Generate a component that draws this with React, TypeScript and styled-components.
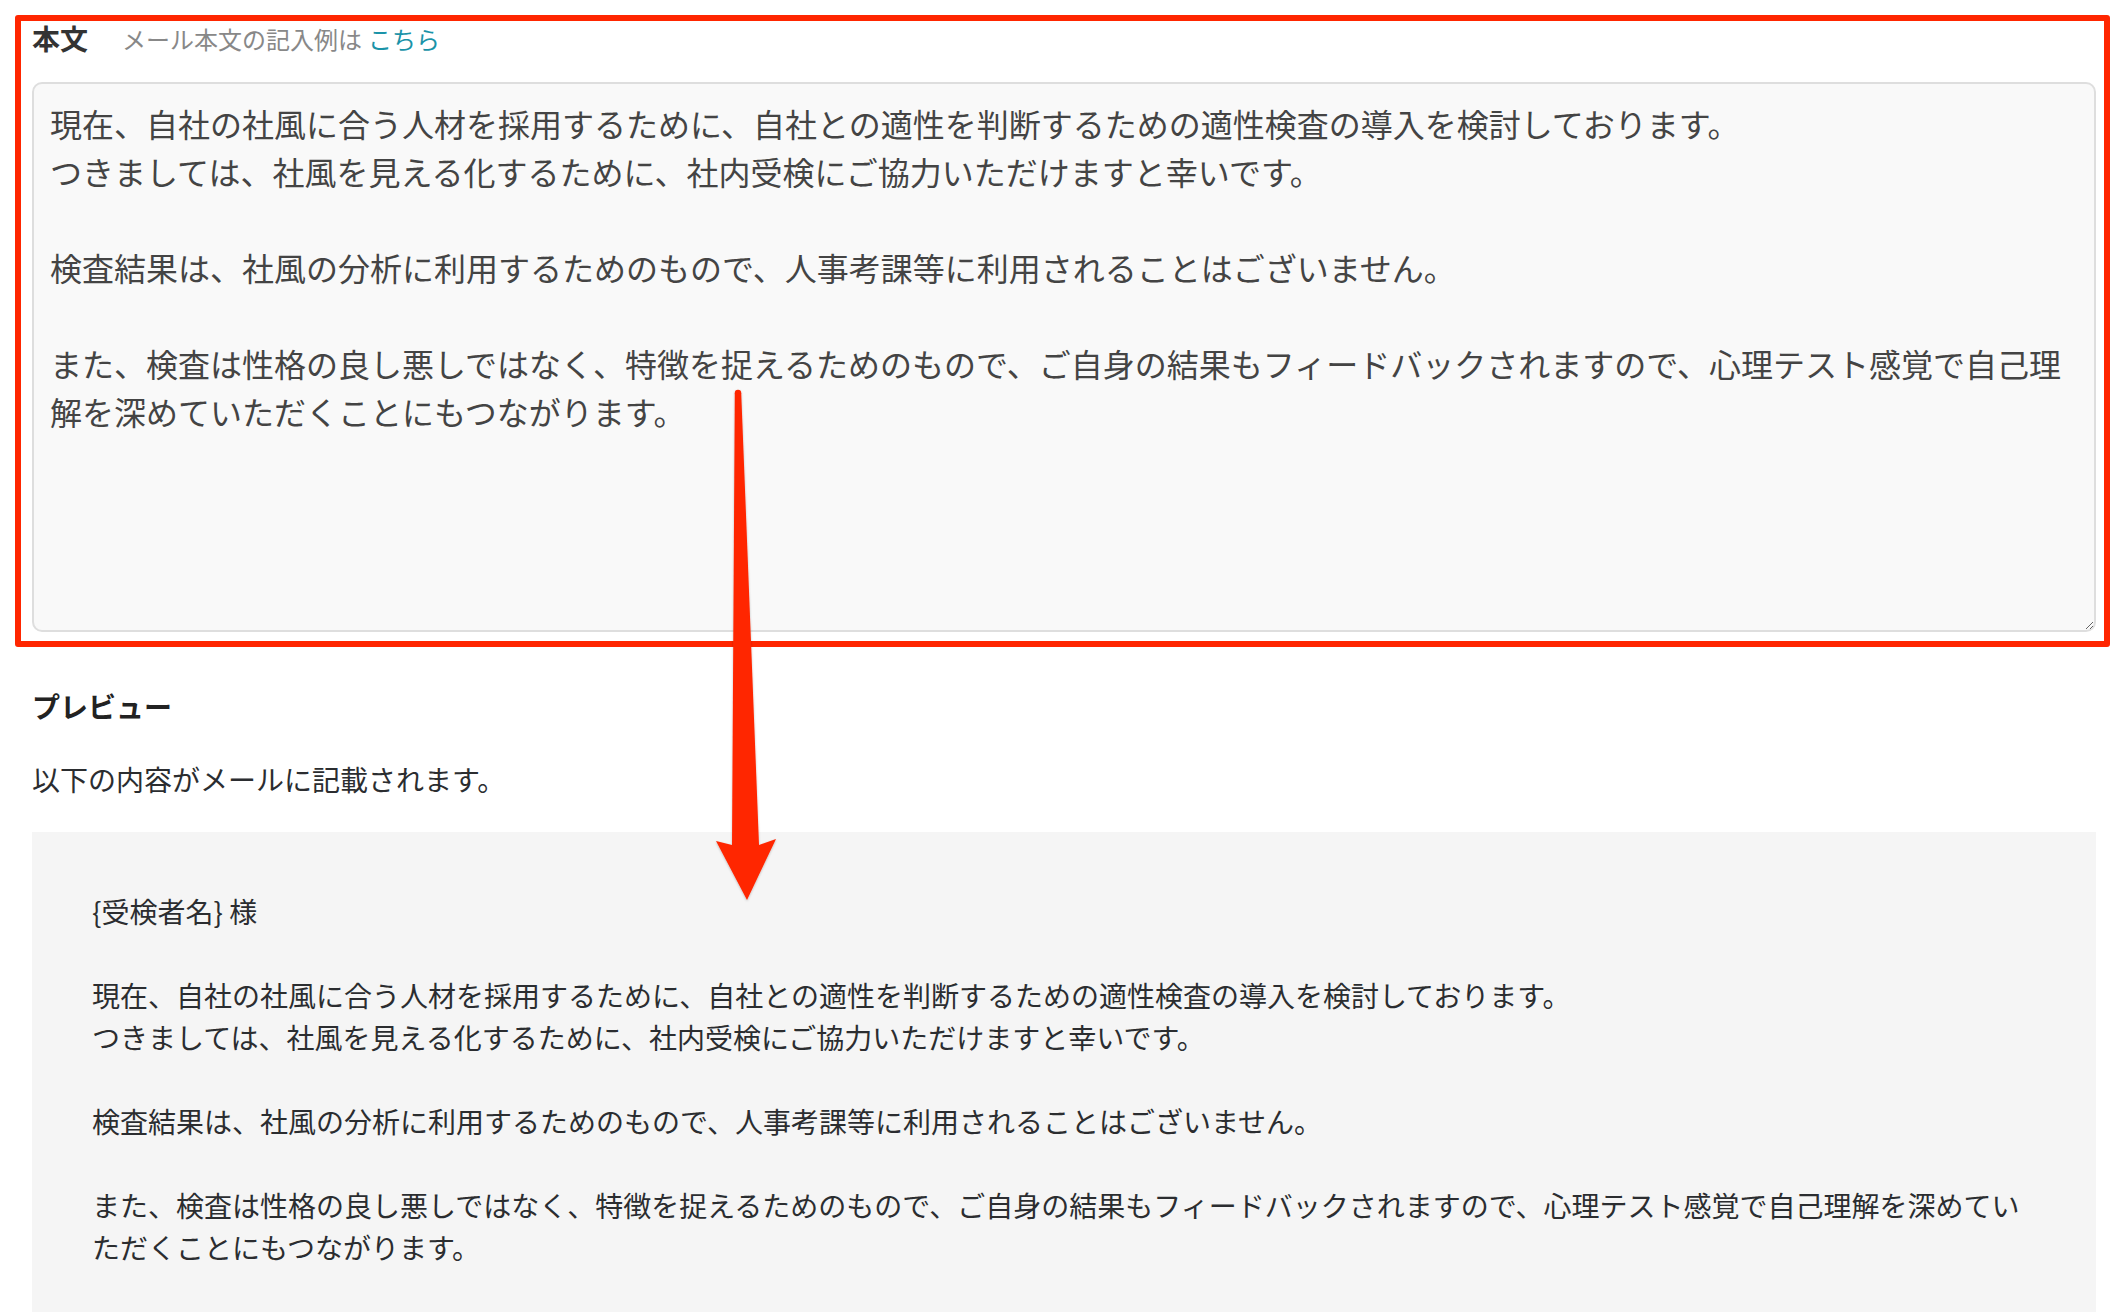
import styled, { createGlobalStyle } from "styled-components";

const GlobalStyle = createGlobalStyle`
  html, body {
    margin: 0;
    padding: 0;
    background: #ffffff;
  }
  body {
    font-family: "Noto Sans CJK JP", "Noto Sans", sans-serif;
    color: #333;
  }
`;

const Page = styled.div`
  position: relative;
  padding: 15px 4px 0 15px;
  min-height: 1312px;
  box-sizing: border-box;
`;

const Highlight = styled.section`
  border: 6px solid #ff2600;
  border-radius: 3px;
  padding: 0 8px 9px 11px;
`;

const LabelRow = styled.div`
  display: flex;
  align-items: center;
  height: 34px;
  margin-bottom: 27px;
`;

const Label = styled.span`
  font-size: 28px;
  font-weight: 700;
  color: #333;
  margin-right: 34px;
`;

const Hint = styled.span`
  font-size: 24px;
  color: #888;
`;

const HintLink = styled.a`
  font-size: 24px;
  color: #1a93a8;
  text-decoration: none;
  margin-left: 6px;
`;

const BodyInput = styled.textarea`
  display: block;
  width: 100%;
  height: 550px;
  box-sizing: border-box;
  margin: 0;
  padding: 15px 16px;
  border: 2px solid #dedede;
  border-radius: 10px;
  background: #f9f9f9;
  font-family: "Noto Sans CJK JP", "Noto Sans", sans-serif;
  font-size: 32px;
  line-height: 48px;
  color: #444;
  outline: none;
  resize: vertical;
`;

const PreviewSection = styled.section`
  padding: 38px 14px 0 17px;
`;

const PreviewTitle = styled.h3`
  margin: 0 0 31px;
  font-size: 28px;
  line-height: 42px;
  font-weight: 700;
  color: #222;
`;

const PreviewNote = styled.p`
  margin: 0 0 32px;
  font-size: 28px;
  line-height: 42px;
  color: #2b2d30;
`;

const PreviewBox = styled.div`
  background: #f5f5f5;
  padding: 58px 60px 60px;
  font-size: 28px;
  line-height: 42px;
  color: #2b2d30;
  white-space: pre-wrap;
`;

const Arrow = styled.svg`
  position: absolute;
  left: 700px;
  top: 380px;
  width: 100px;
  height: 530px;
  overflow: visible;
  pointer-events: none;
`;

const bodyText =
  "現在、自社の社風に合う人材を採用するために、自社との適性を判断するための適性検査の導入を検討しております。\n" +
  "つきましては、社風を見える化するために、社内受検にご協力いただけますと幸いです。\n\n" +
  "検査結果は、社風の分析に利用するためのもので、人事考課等に利用されることはございません。\n\n" +
  "また、検査は性格の良し悪しではなく、特徴を捉えるためのもので、ご自身の結果もフィードバックされますので、心理テスト感覚で自己理解を深めていただくことにもつながります。";

export default function App() {
  return (
    <>
      <GlobalStyle />
      <Page>
        <Highlight>
          <LabelRow>
            <Label>本文</Label>
            <Hint>メール本文の記入例は</Hint>
            <HintLink href="#">こちら</HintLink>
          </LabelRow>
          <BodyInput defaultValue={bodyText} spellCheck={false} />
        </Highlight>
        <PreviewSection>
          <PreviewTitle>プレビュー</PreviewTitle>
          <PreviewNote>以下の内容がメールに記載されます。</PreviewNote>
          <PreviewBox>{"{受検者名} 様\n\n" + bodyText}</PreviewBox>
        </PreviewSection>
        <Arrow viewBox="0 0 100 530">
          <defs>
            <filter id="arrowShadow" x="-50%" y="-10%" width="200%" height="120%">
              <feDropShadow dx="0" dy="1" stdDeviation="1" floodColor="#000" floodOpacity="0.25" />
            </filter>
          </defs>
          <g filter="url(#arrowShadow)" fill="#ff2600">
            <circle cx="38" cy="13" r="3.2" />
            <polygon points="34.8,13 41.2,13 59,465 76,459 47,520 16,461 32,465" />
          </g>
        </Arrow>
      </Page>
    </>
  );
}
